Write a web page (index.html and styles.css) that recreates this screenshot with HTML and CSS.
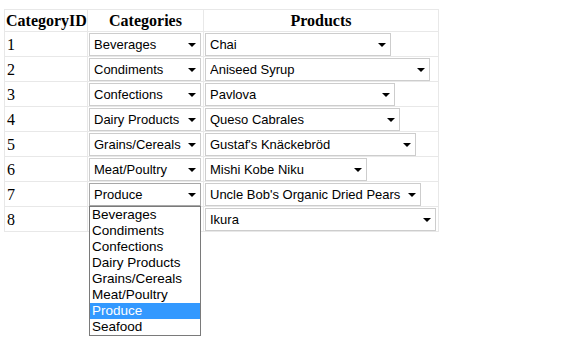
FILE: index.html
```html
<!DOCTYPE html>
<html lang="en">
<head>
    <meta charset="UTF-8">
    <title>Categories and Products</title>
    <link rel="stylesheet" href="styles.css">
</head>
<body>

    <table class="grid">
        <tr>
            <th class="col-id">CategoryID</th>
            <th class="col-cat">Categories</th>
            <th class="col-prod">Products</th>
        </tr>
        <tr>
            <td>1</td>
            <td><span class="pick"><select class="cat"><option>Beverages</option></select></span></td>
            <td><span class="pick"><select class="prod" style="width: 186px"><option>Chai</option></select></span></td>
        </tr>
        <tr>
            <td>2</td>
            <td><span class="pick"><select class="cat"><option>Condiments</option></select></span></td>
            <td><span class="pick"><select class="prod" style="width: 225px"><option>Aniseed Syrup</option></select></span></td>
        </tr>
        <tr>
            <td>3</td>
            <td><span class="pick"><select class="cat"><option>Confections</option></select></span></td>
            <td><span class="pick"><select class="prod" style="width: 190px"><option>Pavlova</option></select></span></td>
        </tr>
        <tr>
            <td>4</td>
            <td><span class="pick"><select class="cat"><option>Dairy Products</option></select></span></td>
            <td><span class="pick"><select class="prod" style="width: 195px"><option>Queso Cabrales</option></select></span></td>
        </tr>
        <tr>
            <td>5</td>
            <td><span class="pick"><select class="cat"><option>Grains/Cereals</option></select></span></td>
            <td><span class="pick"><select class="prod" style="width: 211px"><option>Gustaf's Knäckebröd</option></select></span></td>
        </tr>
        <tr>
            <td>6</td>
            <td><span class="pick"><select class="cat"><option>Meat/Poultry</option></select></span></td>
            <td><span class="pick"><select class="prod" style="width: 162px"><option>Mishi Kobe Niku</option></select></span></td>
        </tr>
        <tr>
            <td>7</td>
            <td>
                <div class="pick">
                    <select class="cat focused"><option>Produce</option></select>
                    <!-- open dropdown list -->
                    <ul class="droplist">
                        <li>Beverages</li>
                        <li>Condiments</li>
                        <li>Confections</li>
                        <li>Dairy Products</li>
                        <li>Grains/Cereals</li>
                        <li>Meat/Poultry</li>
                        <li class="active">Produce</li>
                        <li>Seafood</li>
                    </ul>
                </div>
            </td>
            <td><span class="pick"><select class="prod" style="width: 216px"><option>Uncle Bob's Organic Dried Pears</option></select></span></td>
        </tr>
        <tr>
            <td>8</td>
            <td></td>
            <td><span class="pick"><select class="prod" style="width: 231px"><option>Ikura</option></select></span></td>
        </tr>
    </table>

</body>
</html>
```

FILE: styles.css
```css
* {
    margin: 0;
    padding: 0;
    box-sizing: border-box;
}

html {
    height: 100%;
}

body {
    font-family: "Liberation Serif", "Times New Roman", serif;
    font-size: 16px;
    color: #000;
    background-color: #fff;
    padding: 9px 4px;
    min-height: 100%;
}

.grid {
    border-collapse: collapse;
    table-layout: fixed;
    width: 434px;
    border-top: 1px solid #ececec;
    border-left: 1px solid #ececec;
    border-right: 1px solid #a0a0a0;
    border-bottom: 1px solid #a0a0a0;
}

.grid th,
.grid td {
    border: 1px solid #e8e8e8;
    padding: 1px 1px 0;
    height: 25px;
    text-align: left;
    vertical-align: middle;
    line-height: 18px;
}

.grid th {
    font-weight: bold;
    text-align: center;
    height: 22px;
    padding: 1px 1px 1px;
}

.grid td:first-child {
    padding-left: 2px;
}

.col-id {
    width: 83px;
}

.col-cat {
    width: 116px;
}

.col-prod {
    width: 235px;
}

.pick {
    position: relative;
    display: inline-block;
    vertical-align: top;
}

/* arrow */
.pick::after {
    content: "";
    position: absolute;
    right: 5px;
    top: 10px;
    border-left: 4px solid transparent;
    border-right: 4px solid transparent;
    border-top: 4px solid #000;
    pointer-events: none;
}

.pick select {
    -webkit-appearance: none;
    appearance: none;
    display: block;
    height: 23px;
    padding: 0 16px 0 4px;
    font-family: "Liberation Sans", Arial, sans-serif;
    font-size: 13px;
    color: #000;
    background-color: #fff;
    border: 1px solid #cdcdcd;
    border-radius: 0;
    outline: none;
}

.pick select.cat {
    width: 112px;
}

.pick select.focused {
    border-color: #a8a8a8;
}

.droplist {
    position: absolute;
    left: 0;
    top: 100%;
    width: 112px;
    list-style: none;
    background-color: #fff;
    border: 1px solid #7a7a7a;
    z-index: 2;
    font-family: "Liberation Sans", Arial, sans-serif;
    font-size: 13.5px;
}

.droplist li {
    height: 16px;
    line-height: 16px;
    padding-left: 2px;
    white-space: nowrap;
}

.droplist li.active {
    background-color: #3399ff;
    color: #fff;
}
```
